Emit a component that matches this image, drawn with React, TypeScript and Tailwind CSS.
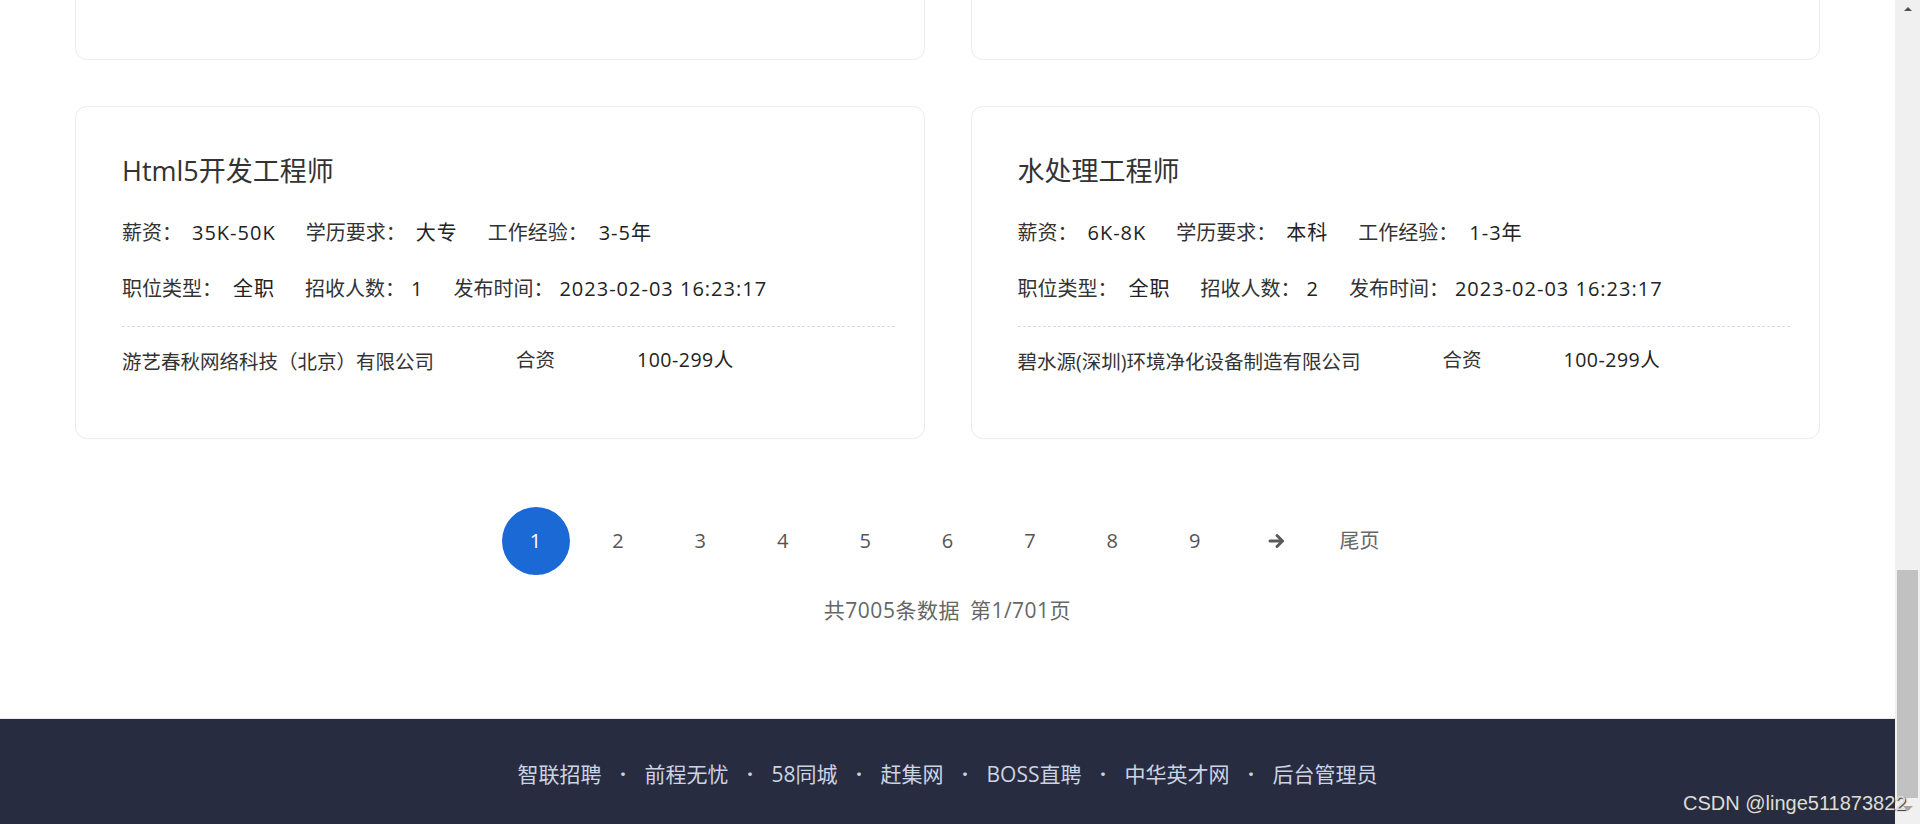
import React from "react";

type Job = {
  title: string;
  salary: string;
  edu: string;
  exp: string;
  type: string;
  count: string;
  time: string;
  company: string;
  nature: string;
  size: string;
};

const jobs: Job[] = [
  {
    title: "Java开发工程师",
    salary: "15K-25K",
    edu: "本科",
    exp: "3-5年",
    type: "全职",
    count: "3",
    time: "2023-02-03 16:23:17",
    company: "北京数聚科技有限公司",
    nature: "民营",
    size: "100-299人",
  },
  {
    title: "前端开发工程师",
    salary: "10K-15K",
    edu: "大专",
    exp: "1-3年",
    type: "全职",
    count: "2",
    time: "2023-02-03 16:23:17",
    company: "上海云帆信息技术有限公司",
    nature: "民营",
    size: "50-99人",
  },
  {
    title: "Html5开发工程师",
    salary: "35K-50K",
    edu: "大专",
    exp: "3-5年",
    type: "全职",
    count: "1",
    time: "2023-02-03 16:23:17",
    company: "游艺春秋网络科技（北京）有限公司",
    nature: "合资",
    size: "100-299人",
  },
  {
    title: "水处理工程师",
    salary: "6K-8K",
    edu: "本科",
    exp: "1-3年",
    type: "全职",
    count: "2",
    time: "2023-02-03 16:23:17",
    company: "碧水源(深圳)环境净化设备制造有限公司",
    nature: "合资",
    size: "100-299人",
  },
];

const footerLinks = ["智联招聘", "前程无忧", "58同城", "赶集网", "BOSS直聘", "中华英才网", "后台管理员"];

const font = { fontFamily: '"Open Sans", "Noto Sans", "Noto Sans CJK SC", sans-serif' };

function Field({ label, value, gap }: { label: string; value: string; gap: string }) {
  return (
    <span className="flex whitespace-nowrap">
      <span className="text-[#333]">{label}</span>
      {/* values carry a touch of tracking so the digits keep the reference's width */}
      <span className={`${gap} tracking-[1px] text-[#222]`}>{value}</span>
    </span>
  );
}

function JobCard({ job }: { job: Job }) {
  return (
    <div className="rounded-[12px] border border-[#ebebf0] bg-white pb-[59px] pl-[46px] pr-[29px] pt-[44px]">
      <h3 className="h-[40px] text-[27px] font-normal leading-[40px] text-[#333]">{job.title}</h3>
      <div className="mt-[24px] flex h-[36px] items-center gap-[30px] text-[20px] leading-[36px]">
        <Field label="薪资：" value={job.salary} gap="ml-[10px]" />
        <Field label="学历要求：" value={job.edu} gap="ml-[10px]" />
        <Field label="工作经验：" value={job.exp} gap="ml-[11px]" />
      </div>
      <div className="mt-[20px] flex h-[36px] items-center gap-[30px] text-[20px] leading-[36px]">
        <Field label="职位类型：" value={job.type} gap="ml-[11px]" />
        <Field label="招收人数：" value={job.count} gap="ml-[6px]" />
        <Field label="发布时间：" value={job.time} gap="ml-[6px]" />
      </div>
      <div className="mt-[19px] border-t border-dashed border-[#d3dbf2]" />
      <div className="mt-[16px] flex h-[36px] items-center gap-[82px] text-[19.5px] leading-[36px] text-[#333]">
        <span className="translate-y-[1px] whitespace-nowrap">{job.company}</span>
        <span className="-translate-y-[1px]">{job.nature}</span>
        <span className="-translate-y-[1px] tracking-[0.5px] text-[#222]">{job.size}</span>
      </div>
    </div>
  );
}

function Pagination() {
  const pages = [1, 2, 3, 4, 5, 6, 7, 8, 9];
  return (
    <div className="mt-[68px] flex flex-col items-center">
      <div className="flex items-center gap-[14.4px] text-[20px] text-[#555]">
        {pages.map((p) => (
          <a
            key={p}
            className={
              p === 1
                ? "flex h-[68px] w-[68px] items-center justify-center rounded-full bg-[#1b69d5] text-white"
                : "flex h-[68px] w-[68px] items-center justify-center"
            }
          >
            {p}
          </a>
        ))}
        <a className="flex h-[68px] w-[68px] items-center justify-center">
          <svg width="18" height="16" viewBox="0 0 18 16" fill="none">
            <path d="M2 8h12" stroke="#5a5a5a" strokeWidth="3" strokeLinecap="round" />
            <path d="M9 2.5L14.5 8L9 13.5" stroke="#5a5a5a" strokeWidth="3" strokeLinecap="round" strokeLinejoin="round" />
          </svg>
        </a>
        <a className="flex h-[68px] w-[68px] items-center justify-center text-[#666]">尾页</a>
      </div>
      <p className="mt-[20px] text-[21px] leading-[30px] tracking-[0.5px] text-[#666]">
        共7005条数据<span className="ml-[10px]">第1/701页</span>
      </p>
    </div>
  );
}

function Footer() {
  return (
    <footer className="mt-[93px] border-t border-[#e8e8ec] bg-[#272c40] pb-[60px] pt-[40px]">
      <nav className="flex items-center justify-center text-[21px] leading-[30px] text-[#ccd3e2]">
        {footerLinks.map((l, i) => (
          <React.Fragment key={l}>
            {i > 0 && <span className="mx-[18.5px] text-[21px] font-bold">·</span>}
            <a>{l}</a>
          </React.Fragment>
        ))}
      </nav>
    </footer>
  );
}

function Scrollbar() {
  return (
    <div className="flex h-[824px] w-[25px] shrink-0 flex-col bg-[#f0f0f0]">
      <div className="flex h-[17px] items-center justify-center">
        <div className="h-0 w-0 border-x-[4px] border-b-[4px] border-x-transparent border-b-[#505050]" />
      </div>
      <div className="flex-1" />
      <div className="mx-auto h-[228px] w-[21px] bg-[#c1c1c1]" />
      <div className="flex h-[26px] items-start justify-center pt-[8px]">
        <div className="h-0 w-0 border-x-[5px] border-t-[5px] border-x-transparent border-t-[#a3a3a3]" />
      </div>
    </div>
  );
}

export default function App() {
  return (
    <div className="relative flex h-[824px] w-full overflow-hidden bg-white" style={font}>
      <main className="min-w-0 flex-1">
        <div className="-mt-[273px]">
          <div className="mx-auto grid w-[1745px] grid-cols-2 gap-[46px]">
            {jobs.map((j) => (
              <JobCard key={j.title} job={j} />
            ))}
          </div>
          <Pagination />
          <Footer />
        </div>
      </main>
      <Scrollbar />
      <span
        className="absolute left-[1683px] top-[791px] whitespace-nowrap text-[20px] leading-[24px] text-[#dcdcdc] [text-shadow:1px_1px_1px_#333]"
        style={{ fontFamily: '"Liberation Sans", Arial, sans-serif' }}
      >
        CSDN @linge511873822
      </span>
    </div>
  );
}
